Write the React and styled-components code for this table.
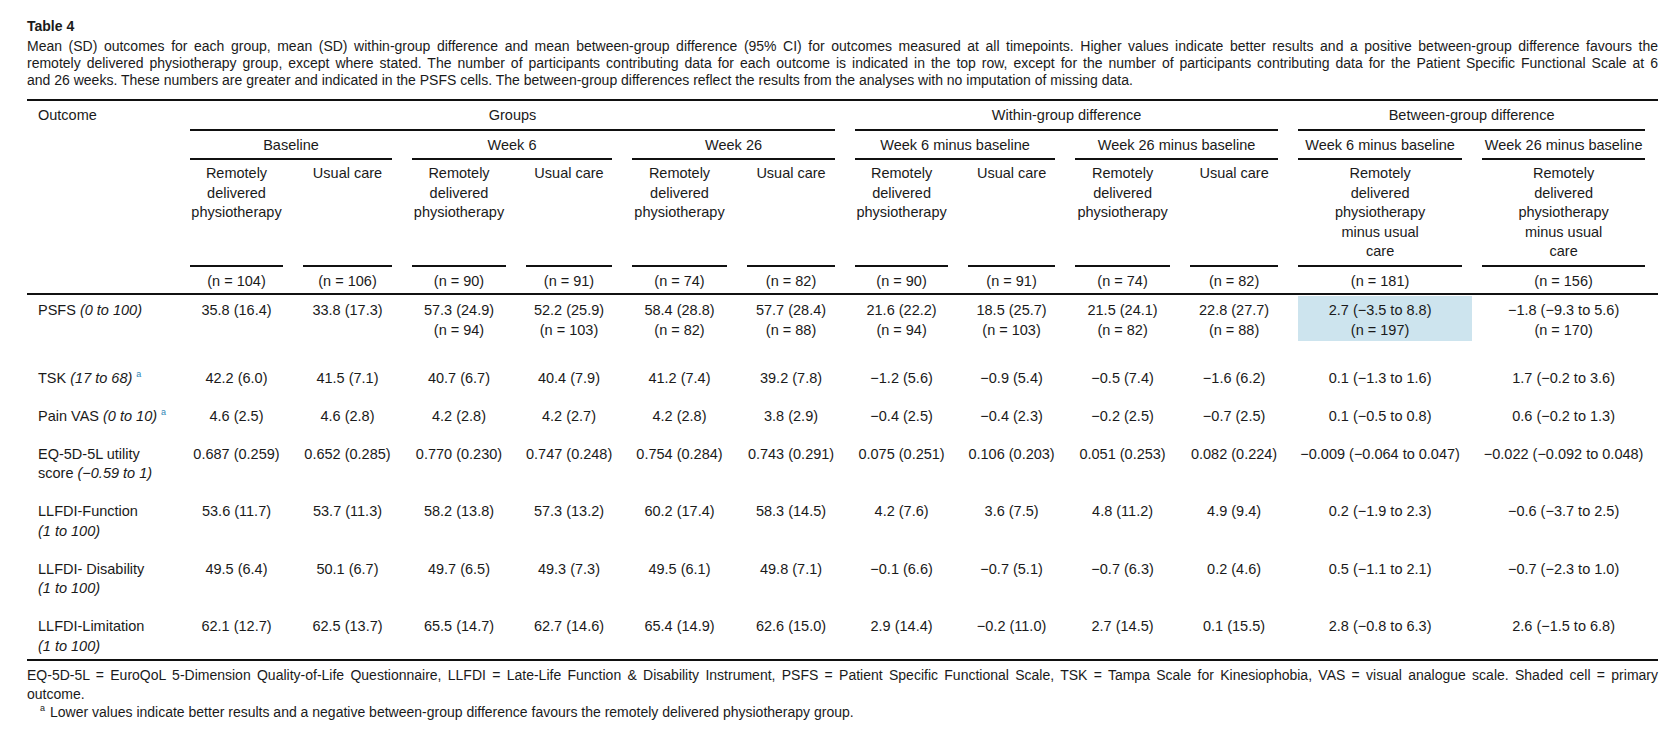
import React from "react";
import styled, { createGlobalStyle } from "styled-components";

const GlobalStyle = createGlobalStyle`
  body {
    margin: 0;
    background: #fff;
    color: #1a1a1a;
    font-family: "Liberation Sans", Arial, sans-serif;
  }
`;

const colWidths = [153, 113, 109, 114, 106, 115, 108, 113, 107, 115, 108, 184, 186];

const captionLines = [
  "Mean (SD) outcomes for each group, mean (SD) within-group difference and mean between-group difference (95% CI) for outcomes measured at all timepoints. Higher values indicate better results and a positive between-group difference favours the",
  "remotely delivered physiotherapy group, except where stated. The number of participants contributing data for each outcome is indicated in the top row, except for the number of participants contributing data for the Patient Specific Functional Scale at 6",
  "and 26 weeks. These numbers are greater and indicated in the PSFS cells. The between-group differences reflect the results from the analyses with no imputation of missing data.",
];

const footerLines = [
  "EQ-5D-5L = EuroQoL 5-Dimension Quality-of-Life Questionnaire, LLFDI = Late-Life Function & Disability Instrument, PSFS = Patient Specific Functional Scale, TSK = Tampa Scale for Kinesiophobia, VAS = visual analogue scale. Shaded cell = primary",
  "outcome.",
];

const remote = ["Remotely", "delivered", "physiotherapy"];
const usual = ["Usual care"];
const between = ["Remotely", "delivered", "physiotherapy", "minus usual", "care"];
const subHeads = [remote, usual, remote, usual, remote, usual, remote, usual, remote, usual, between, between];

const counts = ["104", "106", "90", "91", "74", "82", "90", "91", "74", "82", "181", "156"];

const rows = [
  {
    label: "PSFS",
    range: "(0 to 100)",
    tall: true,
    cells: [
      ["35.8 (16.4)"], ["33.8 (17.3)"], ["57.3 (24.9)", "(n = 94)"], ["52.2 (25.9)", "(n = 103)"],
      ["58.4 (28.8)", "(n = 82)"], ["57.7 (28.4)", "(n = 88)"], ["21.6 (22.2)", "(n = 94)"],
      ["18.5 (25.7)", "(n = 103)"], ["21.5 (24.1)", "(n = 82)"], ["22.8 (27.7)", "(n = 88)"],
      ["2.7 (−3.5 to 8.8)", "(n = 197)"], ["−1.8 (−9.3 to 5.6)", "(n = 170)"],
    ],
    shaded: 10,
  },
  {
    label: "TSK",
    range: "(17 to 68)",
    note: true,
    cells: [
      ["42.2 (6.0)"], ["41.5 (7.1)"], ["40.7 (6.7)"], ["40.4 (7.9)"], ["41.2 (7.4)"], ["39.2 (7.8)"],
      ["−1.2 (5.6)"], ["−0.9 (5.4)"], ["−0.5 (7.4)"], ["−1.6 (6.2)"], ["0.1 (−1.3 to 1.6)"], ["1.7 (−0.2 to 3.6)"],
    ],
  },
  {
    label: "Pain VAS",
    range: "(0 to 10)",
    note: true,
    cells: [
      ["4.6 (2.5)"], ["4.6 (2.8)"], ["4.2 (2.8)"], ["4.2 (2.7)"], ["4.2 (2.8)"], ["3.8 (2.9)"],
      ["−0.4 (2.5)"], ["−0.4 (2.3)"], ["−0.2 (2.5)"], ["−0.7 (2.5)"], ["0.1 (−0.5 to 0.8)"], ["0.6 (−0.2 to 1.3)"],
    ],
  },
  {
    label: "EQ-5D-5L utility",
    range: "score (−0.59 to 1)",
    breakRange: true,
    cells: [
      ["0.687 (0.259)"], ["0.652 (0.285)"], ["0.770 (0.230)"], ["0.747 (0.248)"], ["0.754 (0.284)"],
      ["0.743 (0.291)"], ["0.075 (0.251)"], ["0.106 (0.203)"], ["0.051 (0.253)"], ["0.082 (0.224)"],
      ["−0.009 (−0.064 to 0.047)"], ["−0.022 (−0.092 to 0.048)"],
    ],
  },
  {
    label: "LLFDI-Function",
    range: "(1 to 100)",
    breakRange: true,
    cells: [
      ["53.6 (11.7)"], ["53.7 (11.3)"], ["58.2 (13.8)"], ["57.3 (13.2)"], ["60.2 (17.4)"], ["58.3 (14.5)"],
      ["4.2 (7.6)"], ["3.6 (7.5)"], ["4.8 (11.2)"], ["4.9 (9.4)"], ["0.2 (−1.9 to 2.3)"], ["−0.6 (−3.7 to 2.5)"],
    ],
  },
  {
    label: "LLFDI- Disability",
    range: "(1 to 100)",
    breakRange: true,
    cells: [
      ["49.5 (6.4)"], ["50.1 (6.7)"], ["49.7 (6.5)"], ["49.3 (7.3)"], ["49.5 (6.1)"], ["49.8 (7.1)"],
      ["−0.1 (6.6)"], ["−0.7 (5.1)"], ["−0.7 (6.3)"], ["0.2 (4.6)"], ["0.5 (−1.1 to 2.1)"], ["−0.7 (−2.3 to 1.0)"],
    ],
  },
  {
    label: "LLFDI-Limitation",
    range: "(1 to 100)",
    breakRange: true,
    cells: [
      ["62.1 (12.7)"], ["62.5 (13.7)"], ["65.5 (14.7)"], ["62.7 (14.6)"], ["65.4 (14.9)"], ["62.6 (15.0)"],
      ["2.9 (14.4)"], ["−0.2 (11.0)"], ["2.7 (14.5)"], ["0.1 (15.5)"], ["2.8 (−0.8 to 6.3)"], ["2.6 (−1.5 to 6.8)"],
    ],
  },
];

const lines = (arr) =>
  arr.map((t, i) => (
    <React.Fragment key={i}>
      {i > 0 && <br />}
      {t}
    </React.Fragment>
  ));

// the range part is italic; for the EQ-5D row the word "score" stays upright
const renderRange = (range) => {
  const m = range.match(/^(score )(.*)$/);
  if (m) {
    return (
      <>
        {m[1]}
        <Range>{m[2]}</Range>
      </>
    );
  }
  return <Range>{range}</Range>;
};

const App = () => {
  return (
    <Page>
      <GlobalStyle />
      <Title>Table 4</Title>
      <Caption>
        {captionLines.map((l, i) => (
          <JustLine key={i} $full={i < captionLines.length - 1}>
            {l}
          </JustLine>
        ))}
      </Caption>

      <Table>
        <colgroup>
          {colWidths.map((w, i) => (
            <col key={i} style={{ width: w }} />
          ))}
        </colgroup>
        <thead>
          <tr>
            <OutcomeHead rowSpan={4}>Outcome</OutcomeHead>
            <GroupHead colSpan={6}>
              <Ruled>Groups</Ruled>
            </GroupHead>
            <GroupHead colSpan={4}>
              <Ruled>Within-group difference</Ruled>
            </GroupHead>
            <GroupHead colSpan={2} $last>
              <Ruled>Between-group difference</Ruled>
            </GroupHead>
          </tr>
          <tr>
            <GroupHead colSpan={2}>
              <Ruled>Baseline</Ruled>
            </GroupHead>
            <GroupHead colSpan={2}>
              <Ruled>Week 6</Ruled>
            </GroupHead>
            <GroupHead colSpan={2}>
              <Ruled>Week 26</Ruled>
            </GroupHead>
            <GroupHead colSpan={2}>
              <Ruled>Week 6 minus baseline</Ruled>
            </GroupHead>
            <GroupHead colSpan={2}>
              <Ruled>Week 26 minus baseline</Ruled>
            </GroupHead>
            <GroupHead>
              <Ruled>Week 6 minus baseline</Ruled>
            </GroupHead>
            <GroupHead $last>
              <Ruled>Week 26 minus baseline</Ruled>
            </GroupHead>
          </tr>
          <tr>
            {subHeads.map((s, i) => (
              <GroupHead key={i} $sub $last={i === subHeads.length - 1}>
                <Ruled $tall>{lines(s)}</Ruled>
              </GroupHead>
            ))}
          </tr>
          <tr>
            {counts.map((n, i) => (
              <CountHead key={i} $last={i === counts.length - 1}>
                (n = {n})
              </CountHead>
            ))}
          </tr>
        </thead>
        <tbody>
          {rows.map((r, ri) => (
            <Row key={ri} $tall={r.tall}>
              <LabelCell>
                {r.label}
                {r.breakRange ? <br /> : " "}
                {renderRange(r.range)}
                {r.note && (
                  <>
                    {" "}
                    <NoteMark>a</NoteMark>
                  </>
                )}
              </LabelCell>
              {r.cells.map((c, ci) => (
                <Cell key={ci} $last={ci === r.cells.length - 1}>
                  {r.shaded === ci ? <Shade>{lines(c)}</Shade> : lines(c)}
                </Cell>
              ))}
            </Row>
          ))}
        </tbody>
      </Table>

      <Footer>
        {footerLines.map((l, i) => (
          <JustLine key={i} $full={i < footerLines.length - 1}>
            {l}
          </JustLine>
        ))}
      </Footer>
      <Footnote>
        <sup>a</sup>
        <span>
          Lower values indicate better results and a negative between-group difference favours the remotely
          delivered physiotherapy group.
        </span>
      </Footnote>
    </Page>
  );
};

const Page = styled.div`
  padding: 18px 20px 20px 27px;
`;

const Title = styled.div`
  font-size: 14px;
  font-weight: 700;
  line-height: 17px;
  margin-bottom: 3px;
`;

const Caption = styled.div`
  margin: 0 0 11px;
  font-size: 14px;
  line-height: 16.8px;
`;

const JustLine = styled.span`
  display: block;
  white-space: nowrap;
  text-align: ${(p) => (p.$full ? "justify" : "left")};
  text-align-last: ${(p) => (p.$full ? "justify" : "left")};
`;

const Table = styled.table`
  width: 1631px;
  table-layout: fixed;
  border-collapse: separate;
  border-spacing: 0;
  border-top: 2px solid #111;
  border-bottom: 2px solid #111;
  font-size: 14.5px;
  line-height: 19.5px;
`;

const OutcomeHead = styled.th`
  text-align: left;
  vertical-align: top;
  font-weight: 400;
  padding: 5px 10px 0 11px;
  border-bottom: 2px solid #111;
`;

const GroupHead = styled.th`
  font-weight: 400;
  text-align: center;
  vertical-align: top;
  padding: ${(p) => (p.$sub ? "4px" : "5px")} ${(p) => (p.$last ? "13px" : "10px")} 0 10px;
  white-space: nowrap;
`;

const Ruled = styled.div`
  padding-bottom: 3px;
  border-bottom: 2px solid #111;
  min-height: ${(p) => (p.$tall ? "97.5px" : "auto")};
`;

const CountHead = styled.th`
  font-weight: 400;
  text-align: center;
  vertical-align: top;
  padding: 5px ${(p) => (p.$last ? "13px" : "10px")} 2px 10px;
  border-bottom: 2px solid #111;
  white-space: nowrap;
`;

const Row = styled.tr`
  td {
    padding-bottom: ${(p) => (p.$tall ? "21.5px" : "12.5px")};
  }
  &:last-child td {
    padding-bottom: 3px;
  }
`;

const LabelCell = styled.td`
  text-align: left;
  vertical-align: top;
  white-space: nowrap;
  padding: 6px 10px 12.5px 11px;
`;

const Range = styled.i`
  font-style: italic;
`;

const NoteMark = styled.sup`
  font-size: 9px;
  line-height: 0;
  color: #2f86b5;
  vertical-align: 6px;
`;

const Cell = styled.td`
  text-align: center;
  vertical-align: top;
  white-space: nowrap;
  padding: 6px ${(p) => (p.$last ? "13px" : "10px")} 12.5px 10px;
`;

const Shade = styled.div`
  background: #cde4ee;
  margin: -5px -10px 0 0;
  padding: 5px 10px 1px 0;
`;

const Footer = styled.div`
  margin: 5px 0 0;
  font-size: 14px;
  line-height: 18.5px;
`;

const Footnote = styled.p`
  margin: 0;
  padding-left: 13px;
  font-size: 14px;
  line-height: 18.5px;

  sup {
    font-size: 9px;
    line-height: 0;
    vertical-align: 6px;
    margin-right: 5px;
  }
`;

export default App;
